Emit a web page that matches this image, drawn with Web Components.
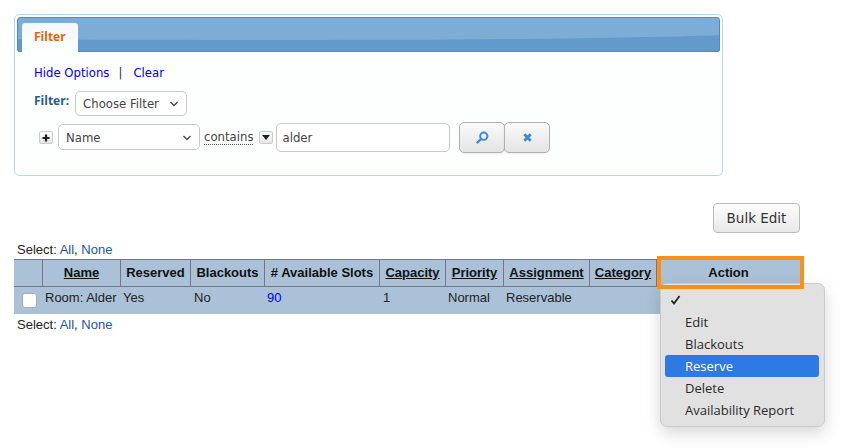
<!DOCTYPE html>
<html>
<head>
<meta charset="utf-8">
<title>Resources</title>
<style>
  html, body { margin: 0; background: #fff; }
  body { width: 842px; height: 448px; overflow: hidden; position: relative; }
  select-line.top { margin-top: 9px; }
</style>
</head>
<body>
<filter-panel></filter-panel>
<bulk-bar></bulk-bar>
<select-line class="top"></select-line>
<resource-table></resource-table>
<select-line></select-line>
<action-menu></action-menu>
<action-mark></action-mark>

<script>
class FilterPanel extends HTMLElement {
  constructor() {
    super();
    const shadowRoot = this.attachShadow({ mode: 'open' });
    shadowRoot.innerHTML = `
      <style>
        :host {
          display: block; box-sizing: border-box; width: 709px; height: 162px; margin: 14px 0 0 14px;
          border: 1px solid #bcd6ea; border-radius: 5px; background: #fdfefe; padding: 2px;
          font: 11.7px "DejaVu Sans", sans-serif; color: #333;
        }
        .bar {
          position: relative; box-sizing: border-box; height: 35px; border: 1px solid #4a8bc6; border-bottom: 0;
          border-radius: 4px 4px 3px 3px; overflow: hidden; padding: 5px 0 0 4px;
          background: #629bcb; box-shadow: inset 0 -1px 0 #4a8bc6;
        }
        .shine { position: absolute; left: -250px; right: -40px; top: 0; height: 22px; border-radius: 0 0 50% 50% / 0 0 8px 8px; background: #7dadd6; }
        .tab {
          position: relative; box-sizing: border-box; width: 56px; height: 29px; border-radius: 3px 3px 0 0;
          background: linear-gradient(#f4f8fb, #fdfefe); color: #e0660f;
          font: bold 12px "Open Sans", sans-serif; padding: 5px 0 0 12px;
        }
        .links { display: flex; align-items: center; margin: 13px 0 0 17px; height: 15px; color: #0000ee; }
        .links .sep { color: #333; margin: 0 11px 0 9px; }
        .choose { display: flex; align-items: flex-start; margin: 11px 0 0 17px; gap: 6px; }
        .choose b { color: #2a5b8f; font: bold 12px "Open Sans", sans-serif; margin-top: 1px; }
        .sel {
          box-sizing: border-box; display: flex; align-items: center; justify-content: space-between;
          height: 25px; background: #fff; border: 1px solid #c8c8c8; border-radius: 5px; padding: 0 7px; color: #444;
        }
        .sel svg { width: 10px; height: 6px; }
        .rule { display: flex; align-items: flex-start; margin: 8px 0 0 22px; }
        .mini {
          box-sizing: border-box; width: 14px; height: 13px; margin-top: 7px; border: 1px solid #ccc; border-radius: 2px;
          background: linear-gradient(#fff, #e6e6e6); display: flex; align-items: center; justify-content: center;
        }
        .name { width: 142px; height: 26px; margin-left: 5px; padding-top: 1px; }
        .op { margin: 3px 0 0 4px; height: 17px; border-bottom: 1px dotted #555; line-height: 20px; color: #444; }
        .input {
          box-sizing: border-box; width: 174px; height: 29px; margin: -1px 0 0 3px; padding: 1px 5px 0; line-height: 27px;
          border: 1px solid #c8c8c8; border-radius: 5px; background: #fff; color: #444;
        }
        .btn {
          box-sizing: border-box; width: 46px; height: 31px; margin-top: -2px; border: 1px solid #b0b0b0; border-radius: 5px;
          background: linear-gradient(#fafafa, #e4e4e4); display: flex; align-items: center; justify-content: center;
          box-shadow: 0 1px 2px rgba(0,0,0,.08);
        }
        .go { margin-left: 9px; }
      </style>
      <div class="bar"><div class="shine"></div><div class="tab">Filter</div></div>
      <div class="links"><span>Hide Options</span><span class="sep">|</span><span>Clear</span></div>
      <div class="choose"><b>Filter:</b>
        <div class="sel" style="width:112px"><span>Choose Filter</span>
          <svg viewBox="0 0 10 6"><path d="M1.5 1L5 4.5 8.5 1" fill="none" stroke="#444" stroke-width="1.3"/></svg></div>
      </div>
      <div class="rule">
        <div class="mini"><svg width="8" height="8" viewBox="0 0 8 8"><path d="M4 .5v7M.5 4h7" stroke="#222" stroke-width="2.2"/></svg></div>
        <div class="sel name"><span>Name</span>
          <svg viewBox="0 0 10 6"><path d="M1.5 1L5 4.5 8.5 1" fill="none" stroke="#444" stroke-width="1.3"/></svg></div>
        <div class="op">contains</div>
        <div class="mini" style="margin:7px 0 0 6px"><svg width="8" height="5" viewBox="0 0 8 5"><path d="M0 0h8L4 5z" fill="#222"/></svg></div>
        <div class="input">alder</div>
        <div class="btn go"><svg width="13" height="13" viewBox="0 0 13 13"><circle cx="7.8" cy="5.2" r="3.6" fill="none" stroke="#3b8ad8" stroke-width="2"/><path d="M5 8L1.5 11.5" stroke="#3b8ad8" stroke-width="2.4" stroke-linecap="round"/></svg></div>
        <div class="btn" style="margin-left:-1px"><svg width="9" height="9" viewBox="0 0 9 9"><path d="M1.3 1.3l6.4 6.4M7.7 1.3L1.3 7.7" stroke="#3b8ad8" stroke-width="2.8"/></svg></div>
      </div>
    `;
  }
}

class BulkBar extends HTMLElement {
  constructor() {
    super();
    const shadowRoot = this.attachShadow({ mode: 'open' });
    shadowRoot.innerHTML = `
      <style>
        :host { display: flex; justify-content: flex-end; width: 800px; margin-top: 27px; }
        button {
          box-sizing: border-box; width: 87px; height: 30px; padding: 0; border: 1px solid #bbb; border-radius: 4px;
          background: linear-gradient(#fdfdfd, #e8e8e8); color: #333; font: 13.5px "DejaVu Sans", sans-serif;
        }
      </style>
      <button>Bulk Edit</button>
    `;
  }
}

class SelectLine extends HTMLElement {
  constructor() {
    super();
    const shadowRoot = this.attachShadow({ mode: 'open' });
    shadowRoot.innerHTML = `
      <style>
        :host { display: block; height: 15px; margin: 3px 0 2px 17px; font: 13px/15px "Liberation Sans", sans-serif; color: #222; white-space: nowrap; }
        span { color: #2255aa; }
      </style>
      Select: <span>All</span>, <span>None</span>
    `;
  }
}

class ResourceTable extends HTMLElement {
  constructor() {
    super();
    const shadowRoot = this.attachShadow({ mode: 'open' });
    const cols = '29px 78px 70px 74px 115px 66px 58px 86px 67px 143px';
    const heads = [['', 0], ['Name', 1], ['Reserved', 0], ['Blackouts', 0], ['# Available Slots', 0],
      ['Capacity', 1], ['Priority', 1], ['Assignment', 1], ['Category', 1], ['Action', 0]];
    const cells = ['<i></i>', 'Room: Alder', 'Yes', 'No', '<a>90</a>', '1', 'Normal', 'Reservable', '', ''];
    const head = heads.map(([t, u]) => `<div class="th">${u ? `<u>${t}</u>` : t}</div>`).join('');
    const row = cells.map(c => `<div class="td">${c}</div>`).join('');
    shadowRoot.innerHTML = `
      <style>
        :host { display: block; width: 786px; margin-left: 14px; font: 13px "Liberation Sans", sans-serif; color: #222; }
        .head, .row { display: grid; grid-template-columns: ${cols}; background: #abc1d7; }
        .head { height: 28px; box-sizing: border-box; border-top: 1px solid #767688; border-bottom: 1px solid #767688; }
        .th { box-sizing: border-box; border-right: 1px solid #767688; font-weight: bold; text-align: center; line-height: 26px; white-space: nowrap; color: #111; }
        .th:last-child { border-right: 0; }
        .row { height: 27px; }
        .td { padding: 3px 0 0 2px; line-height: 15px; white-space: nowrap; }
        .td:nth-child(1) { padding: 0; }
        .td:nth-child(4) { padding-left: 3px; }
        .td:nth-child(6) { padding-left: 3px; }
        a { color: #0000ee; }
        i { display: block; box-sizing: border-box; width: 15px; height: 15px; margin: 6px 0 0 8px; background: #fff; border: 1px solid #aaa; border-radius: 3px; }
      </style>
      <div class="head">${head}</div>
      <div class="row">${row}</div>
    `;
  }
}

class ActionMenu extends HTMLElement {
  constructor() {
    super();
    const shadowRoot = this.attachShadow({ mode: 'open' });
    const items = ['Edit', 'Blackouts', 'Reserve', 'Delete', 'Availability Report'];
    shadowRoot.innerHTML = `
      <style>
        :host {
          position: absolute; left: 660px; top: 283px; box-sizing: border-box; width: 165px; height: 144px; padding: 5px 5px 5px 4px;
          background: #e1e1e1; border: 1px solid #cbcbcb; border-radius: 7px; box-shadow: 0 6px 16px rgba(0,0,0,.16);
          font: 13px "Open Sans", sans-serif; color: #2a2a2a;
        }
        div { height: 22px; line-height: 22px; padding-left: 20px; border-radius: 3px; white-space: nowrap; }
        .on { background: #2e79e3; color: #fff; }
        .check { display: flex; align-items: center; padding-left: 5px; }
      </style>
      <div class="check"><svg width="11" height="10" viewBox="0 0 11 10"><path d="M1.5 5.5L4 8.5 9.5 1" fill="none" stroke="#222" stroke-width="1.8"/></svg></div>
      ${items.map(t => `<div class="${t === 'Reserve' ? 'on' : ''}">${t}</div>`).join('')}
    `;
  }
}

// annotation drawn over the screenshot, sits on top of the menu
class ActionMark extends HTMLElement {
  constructor() {
    super();
    const shadowRoot = this.attachShadow({ mode: 'open' });
    shadowRoot.innerHTML = `
      <style>
        :host { position: absolute; left: 657px; top: 256px; box-sizing: border-box; width: 147px; height: 33px; border: 4px solid #fb8f1a; }
      </style>
    `;
  }
}

window.customElements.define('filter-panel', FilterPanel);
window.customElements.define('bulk-bar', BulkBar);
window.customElements.define('select-line', SelectLine);
window.customElements.define('resource-table', ResourceTable);
window.customElements.define('action-menu', ActionMenu);
window.customElements.define('action-mark', ActionMark);
</script>
</body>
</html>
